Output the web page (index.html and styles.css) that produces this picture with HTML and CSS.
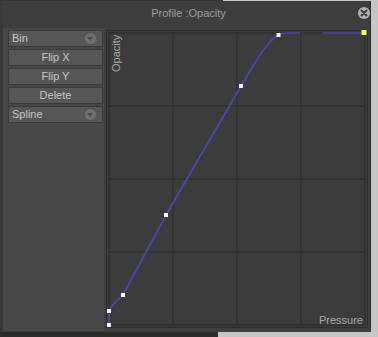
FILE: index.html
```html
<!DOCTYPE html>
<html lang="en">
<head>
  <meta charset="UTF-8">
  <title>Profile :Opacity</title>
  <link rel="stylesheet" href="styles.css">
</head>
<body>
  <div class="window">
    <div class="titlebar">
      <span class="title">Profile :Opacity</span>
      <svg class="close" width="12" height="12" viewBox="0 0 12 12">
        <circle cx="6" cy="6" r="6" fill="#b2b2b2"/>
        <path d="M3.5 3.5 L8.5 8.5 M8.5 3.5 L3.5 8.5" stroke="#3d3d3d" stroke-width="2" stroke-linecap="round"/>
      </svg>
    </div>

    <div class="content">
      <div class="sidebar">
        <div class="btn select">Bin <span class="drop"></span></div>
        <div class="btn">Flip X</div>
        <div class="btn">Flip Y</div>
        <div class="btn">Delete</div>
        <div class="btn select">Spline <span class="drop"></span></div>
      </div>

      <div class="graph">
        <svg width="258" height="294" viewBox="-1 -1 258 294">
          <!-- grid -->
          <g stroke="#2b2b2b" stroke-width="1">
            <path d="M0 -0.5 V292 M64 -0.5 V292 M128 -0.5 V292 M192 -0.5 V292 M256 -0.5 V292"/>
            <path d="M-0.5 0 H256.5 M-0.5 73 H256.5 M-0.5 146 H256.5 M-0.5 219 H256.5 M-0.5 292 H256.5"/>
          </g>
          <text class="axis" transform="translate(11 39) rotate(-90)">Opacity</text>
          <text class="axis" x="254" y="291" text-anchor="end">Pressure</text>
          <!-- curve -->
          <path class="curve" d="M0 292 L0 278 C2 272 8 268 14 262 L57 182 L132 53 C147 28 158 8 169.5 2 C172 0.5 175 0 180 0 L191 0 M214 0 L254 0"/>
          <g fill="#ffffff">
            <rect x="-2" y="290" width="4" height="4"/>
            <rect x="-2" y="276" width="4" height="4"/>
            <rect x="12" y="260" width="4" height="4"/>
            <rect x="55" y="180" width="4" height="4"/>
            <rect x="130" y="51" width="4" height="4"/>
            <rect x="167.5" y="0" width="4" height="4"/>
          </g>
          <rect x="252.5" y="-3" width="5" height="5" fill="#ffff3c"/>
        </svg>
      </div>
    </div>
  </div>
</body>
</html>
```

FILE: styles.css
```css
body {
  margin: 0;
  width: 378px;
  height: 337px;
  overflow: hidden;
  font-family: "Liberation Sans", Arial, sans-serif;
  background-color: #c6c6c6;
  background-image:
    linear-gradient(to right, #353535 223px, transparent 223px),
    linear-gradient(#2a2a2a, #2a2a2a);
  background-size: 100% 1px, 218px 5px;
  background-position: left top, left bottom;
  background-repeat: no-repeat;
}

.window {
  margin-top: 1px;
  width: 371px;
  height: 331px;
  box-sizing: border-box;
  background: #3f3f3f;
  border-left: 3px solid #393939;
  border-right: 1px solid #2e2e2e;
  display: flex;
  flex-direction: column;
}

.titlebar {
  position: relative;
  height: 27px;
  flex: none;
  padding-left: 4px;
  text-align: center;
  line-height: 25px;
  font-size: 11px;
  color: #9c9c9c;
  background: #3e3e3e;
}

.close {
  position: absolute;
  right: 0;
  top: 6px;
}

.content {
  flex: 1;
  display: flex;
  gap: 2px;
  padding-bottom: 1px;
}

.sidebar {
  width: 101px;
  box-sizing: border-box;
  padding: 2px 1px 0 5px;
  background: #474747;
  display: flex;
  flex-direction: column;
  gap: 2px;
}

.btn {
  height: 17px;
  box-sizing: border-box;
  border: 1px solid #3a3a3a;
  background: #565656;
  color: #c6c6c6;
  font-size: 11px;
  line-height: 15px;
  text-align: center;
}

.btn.select {
  display: flex;
  justify-content: space-between;
  align-items: center;
  padding: 0 6px 0 3px;
  text-align: left;
}

.drop {
  width: 11px;
  height: 11px;
  border-radius: 50%;
  background: #6f6f6f;
  position: relative;
}

.drop::after {
  content: "";
  position: absolute;
  left: 2px;
  top: 4px;
  border-left: 3.5px solid transparent;
  border-right: 3.5px solid transparent;
  border-top: 4px solid #4b4b4b;
}

.graph {
  width: 262px;
  box-sizing: border-box;
  margin: 2px 0 3px;
  padding: 1px;
  background: #3c3c3c;
  border: 1px solid #2f2f2f;
}

.graph svg {
  display: block;
  overflow: visible;
}

.axis {
  font-family: "Liberation Sans", Arial, sans-serif;
  font-size: 11px;
  fill: #a8a8a8;
}

.curve {
  fill: none;
  stroke: #4747b8;
  stroke-width: 1.7;
}
```
